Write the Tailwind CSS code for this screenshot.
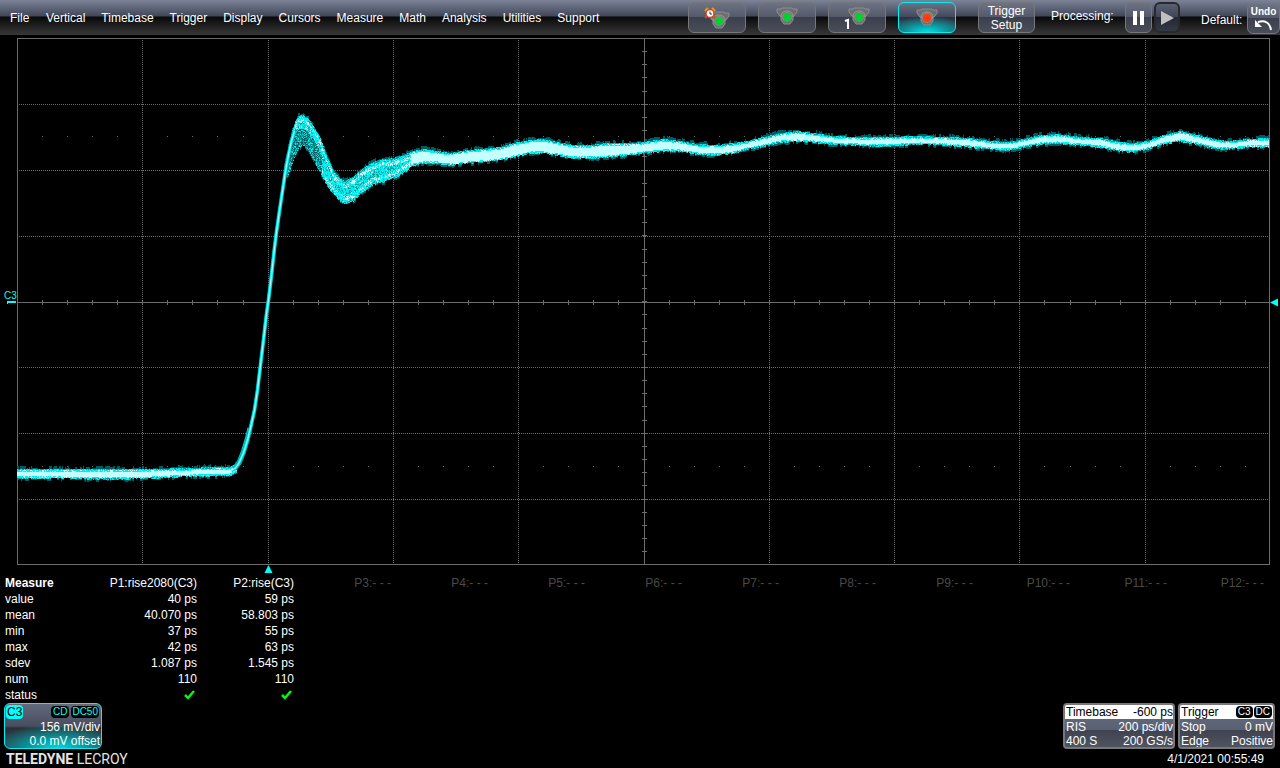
<!DOCTYPE html>
<html lang="en">

<head>
    <meta charset="UTF-8">
    <meta name="viewport" content="width=device-width, initial-scale=1">
    <title>Oscilloscope</title>
    <script src="https://cdn.jsdelivr.net/npm/@tailwindcss/browser@4"></script>
</head>

<body class="bg-black font-['Liberation_Sans',sans-serif] text-xs leading-4 text-white">

    <!-- Icon shared by the trigger mode buttons -->
    <svg class="hidden">
        <symbol id="light" viewBox="0 0 22 18">
            <path d="M1 2H5L6 1H16L17 2H21V5L18 9H17V13L14 17H8L5 13V9H4L1 5Z" fill="#6e7070" stroke="#8e8e8e" stroke-width="1" />
            <path d="M5 10Q5 4 11 4T17 10" fill="none" stroke="#9c9898" stroke-width="1" />
            <circle cx="11" cy="10" r="5" fill="#93888a" />
            <circle cx="11" cy="10" r="4" fill="currentColor" />
        </symbol>
    </svg>

    <header class="flex h-[35px] items-center justify-between bg-[linear-gradient(#7c8397_0px,#414759_16px,#090909_17px,#383838_35px)]">
        <nav class="flex gap-4 pl-[10px]">
            <a href="#" class="min-w-5">File</a>
            <a href="#">Vertical</a>
            <a href="#">Timebase</a>
            <a href="#">Trigger</a>
            <a href="#">Display</a>
            <a href="#">Cursors</a>
            <a href="#">Measure</a>
            <a href="#">Math</a>
            <a href="#">Analysis</a>
            <a href="#">Utilities</a>
            <a href="#">Support</a>
        </nav>

        <div class="flex items-center">
            <div class="flex gap-3">
                <button aria-label="Auto" class="flex h-[31px] w-[58px] items-center justify-center rounded-md border border-[#77777a] bg-[linear-gradient(#6c7385_0,#535869_50%,#3c404d_50%,#4a4e5a_100%)]">
                    <svg class="h-[22px] w-[26px] text-[#00d033]" viewBox="0 0 26 22">
                        <use href="#light" x="4" y="4" width="22" height="18" />
                        <path d="M1 4L4 1M8 1L11 4" stroke="#d9a514" stroke-width="2" />
                        <path d="M3 9L1 11M9 9L11 11" stroke="#e2401c" stroke-width="2" />
                        <circle cx="6" cy="6.500" r="4" fill="#fff" stroke="#e2401c" stroke-width="1.500" />
                        <path d="M6 4.500V7H8" fill="none" stroke="#333" />
                    </svg>
                </button>
                <button aria-label="Normal" class="flex h-[31px] w-[58px] items-center justify-center rounded-md border border-[#77777a] bg-[linear-gradient(#6c7385_0,#535869_50%,#3c404d_50%,#4a4e5a_100%)]">
                    <svg class="mb-1 h-[18px] w-[22px] text-[#00d033]"><use href="#light" /></svg>
                </button>
                <button aria-label="Single" class="flex h-[31px] w-[58px] items-center justify-center rounded-md border border-[#77777a] bg-[linear-gradient(#6c7385_0,#535869_50%,#3c404d_50%,#4a4e5a_100%)]">
                    <svg class="h-[22px] w-[26px] text-[#00d033]" viewBox="0 0 26 22">
                        <use href="#light" x="4" y="0" width="22" height="18" />
                        <path d="M1 14L4 13V22" fill="none" stroke="#fff" stroke-width="2" />
                    </svg>
                </button>
                <button aria-label="Stop" class="flex h-[31px] w-[58px] items-center justify-center rounded-md border border-[#00f0f8] bg-[radial-gradient(ellipse_80%_55%_at_50%_100%,#00e0e6_0,#0c979e_45%,transparent_100%),linear-gradient(#6c7385_0,#41465a_50%,#2c3040_50%,#3c4252_100%)]">
                    <svg class="mb-[2px] h-[18px] w-[22px] text-[#ff3a08]"><use href="#light" /></svg>
                </button>
            </div>
            <button class="ml-[22px] h-[31px] w-[57px] rounded-md border border-[#77777a] bg-[linear-gradient(#6c7385_0,#535869_50%,#3c404d_50%,#4a4e5a_100%)] leading-[14px]">Trigger Setup</button>
            <span class="ml-4 w-[74px] pb-1">Processing:</span>
            <button aria-label="Pause" class="flex h-[31px] w-[27px] items-center justify-center rounded-md border border-[#77777a] bg-[linear-gradient(#6c7385_0,#535869_50%,#3c404d_50%,#4a4e5a_100%)]">
                <svg class="h-4 w-3" viewBox="0 0 12 16"><path d="M0 1H4V15H0ZM7 1H11V15H7Z" fill="#fff" /></svg>
            </button>
            <button aria-label="Run" class="ml-[2px] flex h-[31px] w-[26px] items-center justify-center rounded-md border-2 border-[#29292c] bg-[linear-gradient(#596172_0,#3e4454_50%,#242833_50%,#343945_100%)]">
                <svg class="h-4 w-[14px]" viewBox="0 0 14 16"><path d="M1 1L14 8L1 15Z" fill="#c0c0c0" /></svg>
            </button>
            <span class="ml-[21px] w-[46px] pt-1">Default:</span>
            <button class="mt-[2px] flex h-[31px] w-[33px] flex-col items-center rounded-md border border-[#77777a] bg-[linear-gradient(#6c7385_0,#535869_50%,#3c404d_50%,#4a4e5a_100%)] pt-px text-[10px] font-bold leading-[14px]">
                Undo
                <svg class="h-3 w-5" viewBox="0 0 20 12"><path d="M4 3Q15 0 17 11" fill="none" stroke="#fff" stroke-width="2" /><path d="M1 1V8H8Z" fill="#fff" /></svg>
            </button>
        </div>
    </header>

    <!-- Waveform grid -->
    <svg class="block w-full" viewBox="0 35 1280 540" shape-rendering="crispEdges" fill="none">
        <g stroke="#6c6c6c">
            <path stroke-dasharray="1 1" d="M142.500 40V564M268.500 40V564M393.500 40V564M518.500 40V564M769.500 40V564M894.500 40V564M1019.500 40V564M1145.500 40V564" />
            <path stroke-dasharray="1 1" d="M19 104.500H1269M19 170.500H1269M19 236.500H1269M19 367.500H1269M19 433.500H1269M19 499.500H1269" />
            <path d="M17.500 38.500H1269.500V564.500H17.500ZM17 302.500H1269M644.500 38V564" />
            <path id="ticks" />
        </g>
        <path id="haze" stroke="#005c5e" />
        <path id="dim" stroke="#00a0a2" />
        <path id="bright" stroke="#00eef0" />
        <path id="hot" stroke="#c6ffff" />
        <g stroke-linejoin="round" shape-rendering="auto">
            <path d="M231 470L235 468L239 463L243 453L247 440L250 428" stroke="#00d8da" stroke-width="5" />
            <path d="M231 470L235 468L239 463L243 453L247 440L250 428" stroke="#b4ffff" stroke-width="2" />
        </g>
        <g id="edge" stroke-linejoin="round" shape-rendering="auto">
            <polyline stroke="#007c7e" stroke-width="4" />
            <polyline stroke="#00eef0" stroke-width="3" />
            <polyline stroke="#b4ffff" stroke-width="1" />
        </g>
        <g fill="#00ffff" shape-rendering="auto">
            <text x="4" y="299" font-size="10">C3</text>
            <path d="M7 301H16V303H8V304H7ZM1270 302.500L1278 298.500V306.500ZM268.500 565L272.500 573H264.500Z" />
        </g>
    </svg>

    <!-- Measurements -->
    <div class="pl-[5px] pr-4">
        <table class="w-full table-fixed text-right">
            <thead>
                <tr class="h-4 text-[#4a4a4a]">
                    <th class="w-[95px] text-left font-bold text-white">Measure</th>
                    <th class="whitespace-nowrap font-normal text-white">P1:rise2080(C3)</th>
                    <th class="font-normal text-white">P2:rise(C3)</th>
                    <th class="font-normal">P3:- - -</th>
                    <th class="font-normal">P4:- - -</th>
                    <th class="font-normal">P5:- - -</th>
                    <th class="font-normal">P6:- - -</th>
                    <th class="font-normal">P7:- - -</th>
                    <th class="font-normal">P8:- - -</th>
                    <th class="font-normal">P9:- - -</th>
                    <th class="font-normal">P10:- - -</th>
                    <th class="font-normal">P11:- - -</th>
                    <th class="font-normal">P12:- - -</th>
                </tr>
            </thead>
            <tbody>
                <tr><th class="text-left font-normal">value</th><td>40 ps</td><td>59 ps</td><td colspan="10"></td></tr>
                <tr><th class="text-left font-normal">mean</th><td>40.070 ps</td><td>58.803 ps</td><td colspan="10"></td></tr>
                <tr><th class="text-left font-normal">min</th><td>37 ps</td><td>55 ps</td><td colspan="10"></td></tr>
                <tr><th class="text-left font-normal">max</th><td>42 ps</td><td>63 ps</td><td colspan="10"></td></tr>
                <tr><th class="text-left font-normal">sdev</th><td>1.087 ps</td><td>1.545 ps</td><td colspan="10"></td></tr>
                <tr><th class="text-left font-normal">num</th><td>110</td><td>110</td><td colspan="10"></td></tr>
                <tr>
                    <th class="text-left font-normal">status</th>
                    <td><svg class="ml-auto mr-[2px] h-[10px] w-[11px]" viewBox="0 0 11 10" fill="none"><path d="M1 5L4 8L10 1" stroke="#00f810" stroke-width="2.500" /></svg></td>
                    <td><svg class="ml-auto mr-[2px] h-[10px] w-[11px]" viewBox="0 0 11 10" fill="none"><path d="M1 5L4 8L10 1" stroke="#00f810" stroke-width="2.500" /></svg></td>
                    <td colspan="10"></td>
                </tr>
            </tbody>
        </table>
    </div>

    <!-- Descriptor boxes -->
    <div class="flex gap-[3px] pl-1 pr-[5px]">
        <button class="mr-auto h-[46px] w-[98px] overflow-hidden rounded-md border border-[#00f0f8] bg-[radial-gradient(ellipse_75%_55%_at_55%_100%,#00d8de_0,#0b8f96_45%,transparent_100%),linear-gradient(#626a7e_0,#484d5e_50%,#2c2c34_55%,#35353c_100%)] px-px text-right leading-[14px]">
            <span class="flex h-4 items-center gap-[2px] pr-px text-[10px] leading-3 text-[#00ffff]">
                <span class="mr-auto rounded-sm bg-[#00ffff] px-px text-xs leading-[14px] text-black">C3</span>
                <span class="rounded-sm bg-black px-[2px]">CD</span>
                <span class="rounded-sm bg-black px-px">DC50</span>
            </span>
            <span class="block">156 mV/div</span>
            <span class="block">0.0 mV offset</span>
        </button>
        <button class="h-[46px] w-[112px] overflow-hidden rounded border-2 border-[#77777a] bg-[linear-gradient(#666e82_0,#5a6072_60%,#3f4350_60%,#50545f_100%)] leading-[14px]">
            <span class="flex justify-between bg-white pl-px text-black"><span>Timebase</span><span>-600 ps</span></span>
            <span class="flex justify-between pl-px pt-px"><span>RIS</span><span>200 ps/div</span></span>
            <span class="flex justify-between pl-px"><span>400 S</span><span>200 GS/s</span></span>
        </button>
        <button class="h-[46px] w-[97px] overflow-hidden rounded border-2 border-[#77777a] bg-[linear-gradient(#666e82_0,#5a6072_60%,#3f4350_60%,#50545f_100%)] leading-[14px]">
            <span class="flex items-center gap-px bg-white px-px text-black">
                <span class="mr-auto">Trigger</span>
                <span class="rounded-sm bg-black px-[2px] text-[10px] leading-3 text-white">C3</span>
                <span class="rounded-sm bg-black px-[2px] text-[10px] leading-3 text-white">DC</span>
            </span>
            <span class="flex justify-between pl-px pt-px"><span>Stop</span><span>0 mV</span></span>
            <span class="flex justify-between pl-px"><span>Edge</span><span>Positive</span></span>
        </button>
    </div>

    <footer class="flex h-[19px] items-center justify-between pl-[6px] pr-4">
        <div class="font-[Roboto,sans-serif] text-sm leading-4 text-[#e4e4e4]"><b>TELEDYNE</b> LECROY</div>
        <time>4/1/2021 00:55:49</time>
    </footer>

    <script>
        // Minor divisions on the centre axes and on the 10% / 90% rows
        let ticks = '';
        for (let i = 1; i < 50; i++) {
            const x = Math.round(17 + i * 25.06);
            ticks += `M${x + 0.5} 300v5M${x + 0.5} 136v1M${x + 0.5} 466v1`;
        }
        for (let i = 1; i < 40; i++) {
            ticks += `M642 ${Math.round(38 + i * 13.16) + 0.5}h5`;
        }
        document.getElementById('ticks').setAttribute('d', ticks);

        // Trace envelope: x, top, bottom
        const envelope = [
            [17, 469, 478], [60, 469, 478], [110, 469, 479], [150, 469, 478], [190, 468, 476], [212, 467, 476],
            [230, 467, 475], [236, 464, 472], [284, 166, 182], [288, 147, 174], [292, 130, 163], [295, 121, 154],
            [298, 116, 148], [302, 115, 145], [308, 118, 149], [315, 129, 163], [320, 138, 172], [327, 157, 186],
            [333, 170, 193], [340, 179, 201], [345, 181, 203], [353, 177, 201], [363, 168, 191], [373, 162, 184],
            [383, 159, 182], [393, 158, 178], [403, 155, 173], [413, 151, 165], [423, 149, 163], [437, 151, 163],
            [450, 153, 165], [467, 150, 163], [480, 149, 162], [500, 147, 160], [513, 143, 157], [530, 140, 153],
            [543, 139, 153], [557, 142, 155], [573, 145, 158], [590, 145, 158], [607, 143, 157], [630, 143, 155],
            [643, 142, 153], [663, 139, 151], [680, 141, 151], [697, 144, 154], [717, 145, 155], [733, 143, 153],
            [747, 141, 149], [763, 137, 146], [780, 133, 142], [797, 131, 141], [813, 133, 142], [833, 136, 144],
            [857, 137, 145], [880, 137, 146], [920, 136, 144], [947, 137, 145], [970, 138, 147], [990, 141, 149],
            [1007, 142, 150], [1023, 139, 147], [1040, 135, 144], [1057, 134, 143], [1080, 137, 145], [1100, 138, 147],
            [1120, 142, 151], [1133, 143, 152], [1147, 141, 149], [1163, 135, 144], [1180, 131, 141], [1197, 135, 144],
            [1213, 139, 148], [1227, 141, 149], [1247, 139, 147], [1269, 138, 147]
        ];
        const edge = [
            [234, 469], [238, 464], [243, 453], [247, 440], [250, 428], [254, 410], [257, 390], [260, 365],
            [263, 340], [266, 314], [268, 300], [271, 275], [274, 248], [276, 232], [279, 211], [282, 191],
            [285, 171], [288, 155], [291, 141], [294, 131]
        ];

        let seed = 7;
        const random = () => (seed = (seed * 16807) % 2147483647) / 2147483647;

        const paths = { haze: '', dim: '', bright: '', hot: '' };
        let k = 0;
        let above = 2;
        let below = 2;
        for (let x = 17; x < 1269; x++) {
            if (x > 236 && x < 284) continue;
            while (x > envelope[k + 1][0]) k++;
            const [x0, t0, b0] = envelope[k];
            const [x1, t1, b1] = envelope[k + 1];
            const f = (x - x0) / (x1 - x0);
            const top = t0 + (t1 - t0) * f;
            const bottom = b0 + (b1 - b0) * f;
            const height = bottom - top;
            if (random() < 0.5) above = Math.floor(random() * 4);
            if (random() < 0.5) below = Math.floor(random() * 4);

            for (let y = Math.round(top) - above; y < Math.round(bottom) + below; y++) {
                const depth = Math.min(y - top, bottom - y);
                const n = random();
                let level = 'bright';
                if (depth < -0.5) level = 'haze';
                else if (depth < 1) level = n < 0.5 ? 'dim' : 'bright';
                else if (height < 15) level = depth > 2 || n < 0.3 ? 'hot' : 'bright';
                else if (x < 322 && y - top > 13) level = n < 0.45 ? 'haze' : n < 0.8 ? 'dim' : 'bright';
                else if (depth > 3 && depth < 7) level = n < 0.5 ? 'hot' : 'bright';
                else level = n < 0.08 ? 'hot' : n < 0.35 ? 'dim' : 'bright';
                paths[level] += `M${x + 0.5} ${y}v1`;
            }
        }
        for (const id in paths) {
            document.getElementById(id).setAttribute('d', paths[id]);
        }
        document.querySelectorAll('#edge polyline').forEach(line => {
            line.setAttribute('points', edge.map(p => `${p[0] + 0.5},${p[1]}`).join(' '));
        });
    </script>
</body>

</html>
